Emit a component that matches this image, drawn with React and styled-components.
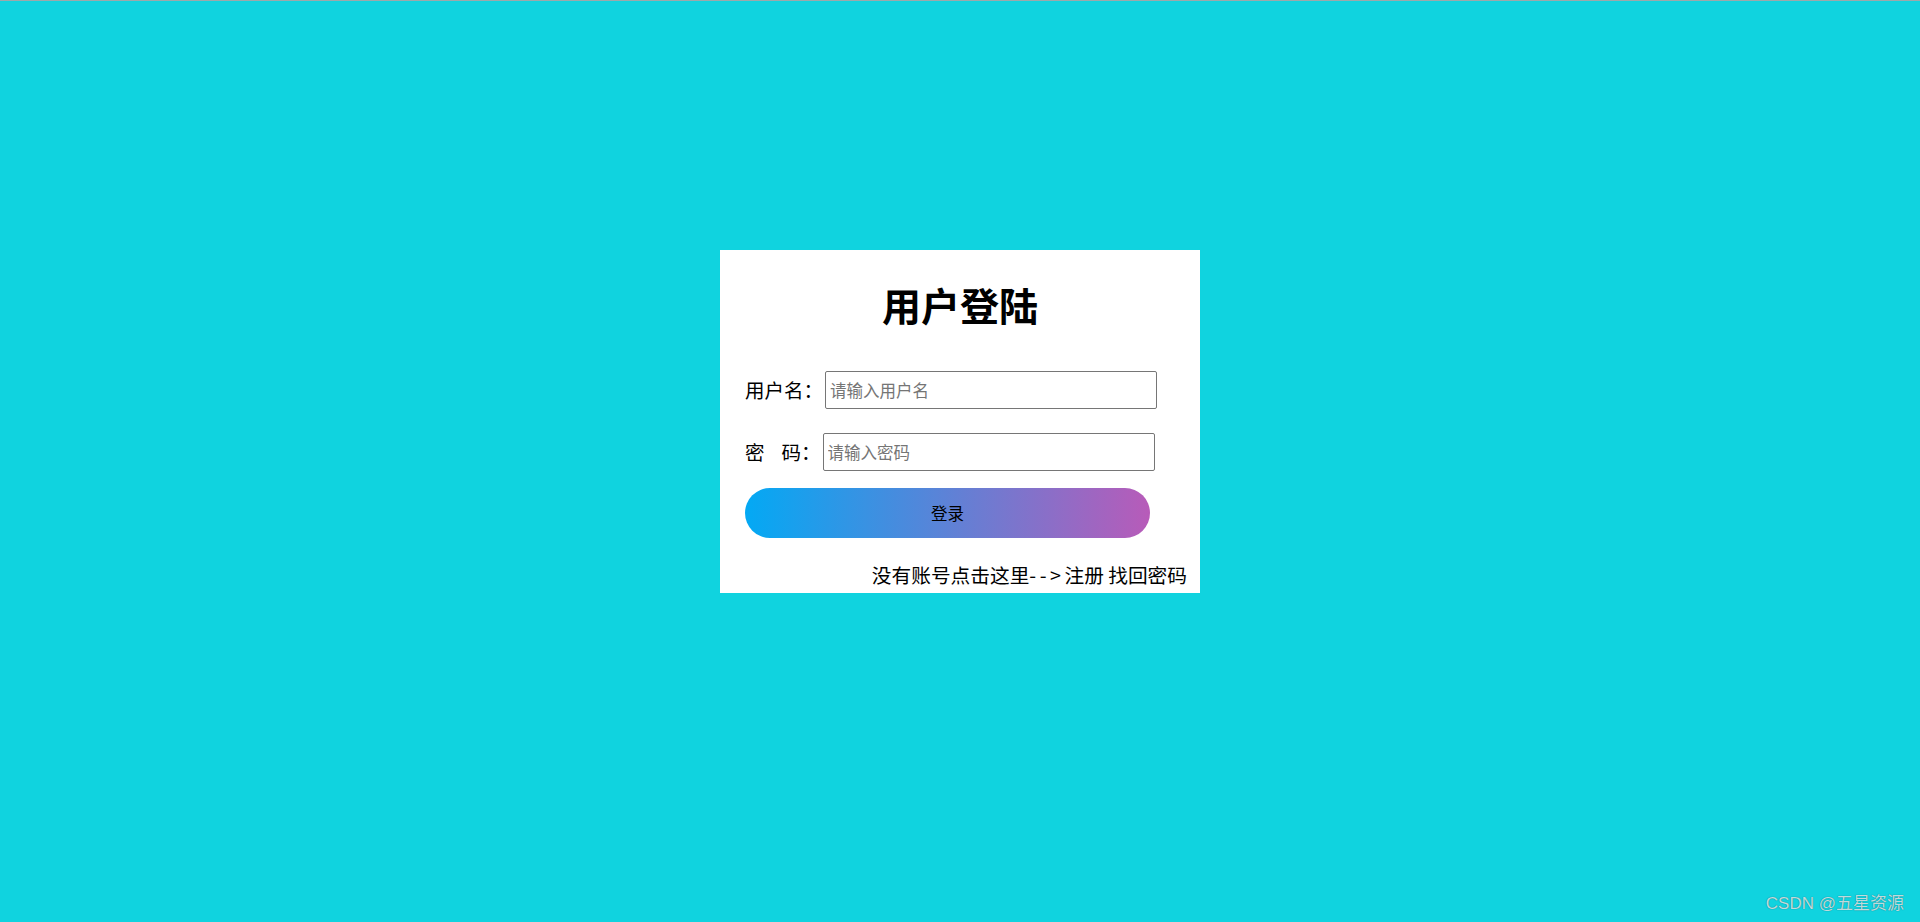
import styled, { createGlobalStyle } from 'styled-components';

const GlobalStyle = createGlobalStyle`
  html, body {
    margin: 0;
    padding: 0;
  }

  body {
    background-color: #10d3df;
    font-family: "Noto Sans CJK SC", "Noto Sans", sans-serif;
  }

  * {
    box-sizing: border-box;
  }
`;

const Page = styled.div`
  position: relative;
  min-height: 100vh;
  padding-top: 249px;
  border-top: 1px solid #9ea8aa;
  background-color: #10d3df;
`;

const Card = styled.form`
  width: 480px;
  height: 343px;
  margin: 0 auto;
  padding: 0 13px 0 25px;
  display: flex;
  flex-direction: column;
  background-color: #fff;
`;

const Title = styled.h1`
  margin: 32px 12px 0 0;
  font-size: 39px;
  line-height: 45px;
  font-weight: 700;
  text-align: center;
  color: #000;
`;

const Row = styled.div`
  display: flex;
  align-items: center;
  height: 38px;
  margin-top: ${props => props.$top}px;
`;

const Label = styled.label`
  font-size: 19.5px;
  line-height: 26px;
  color: #000;
  white-space: nowrap;
`;

const Gap = styled.span`
  display: inline-block;
  width: 17px;
`;

const Input = styled.input`
  width: 332px;
  height: 38px;
  margin-left: 2px;
  padding: 1px 4px;
  border: 1px solid #767676;
  border-radius: 2px;
  font-family: inherit;
  font-size: 16.5px;
  color: #000;
  outline: none;

  &::placeholder {
    color: #757575;
  }
`;

const LoginButton = styled.button`
  width: 405px;
  height: 50px;
  margin-top: 17px;
  border: none;
  border-radius: 25px;
  background: linear-gradient(90deg, #03a9f4, #f441a5, #ffeb3b, #03a9f4);
  background-size: 400%;
  background-position: 0 0;
  font-family: inherit;
  font-size: 16.5px;
  color: #000;
  cursor: pointer;
`;

const Footer = styled.div`
  margin-top: 24px;
  font-size: 19.7px;
  line-height: 26px;
  text-align: right;
  white-space: nowrap;

  a {
    color: #000;
    text-decoration: none;
  }
`;

const Arrow = styled.span`
  letter-spacing: 3.5px;
`;

const Watermark = styled.div`
  position: absolute;
  right: 16px;
  bottom: 8px;
  font-family: "Liberation Sans", "Noto Sans CJK SC", sans-serif;
  font-size: 17px;
  color: rgba(225, 238, 240, 0.85);
  text-shadow: 0 0 1px rgba(0, 0, 0, 0.55);
`;

const App = () => {
  return (
    <>
      <GlobalStyle />
      <Page>
        <Card onSubmit={e => e.preventDefault()}>
          <Title>用户登陆</Title>
          <Row $top={44}>
            <Label htmlFor="username">用户名：</Label>
            <Input id="username" type="text" placeholder="请输入用户名" />
          </Row>
          <Row $top={24}>
            <Label htmlFor="password">密<Gap />码：</Label>
            <Input id="password" type="password" placeholder="请输入密码" />
          </Row>
          <LoginButton type="submit">登录</LoginButton>
          <Footer>
            <a href="#register">没有账号点击这里<Arrow>--&gt;</Arrow>注册</a> <a href="#forgot">找回密码</a>
          </Footer>
        </Card>
        <Watermark>CSDN @五星资源</Watermark>
      </Page>
    </>
  );
};

export default App;
